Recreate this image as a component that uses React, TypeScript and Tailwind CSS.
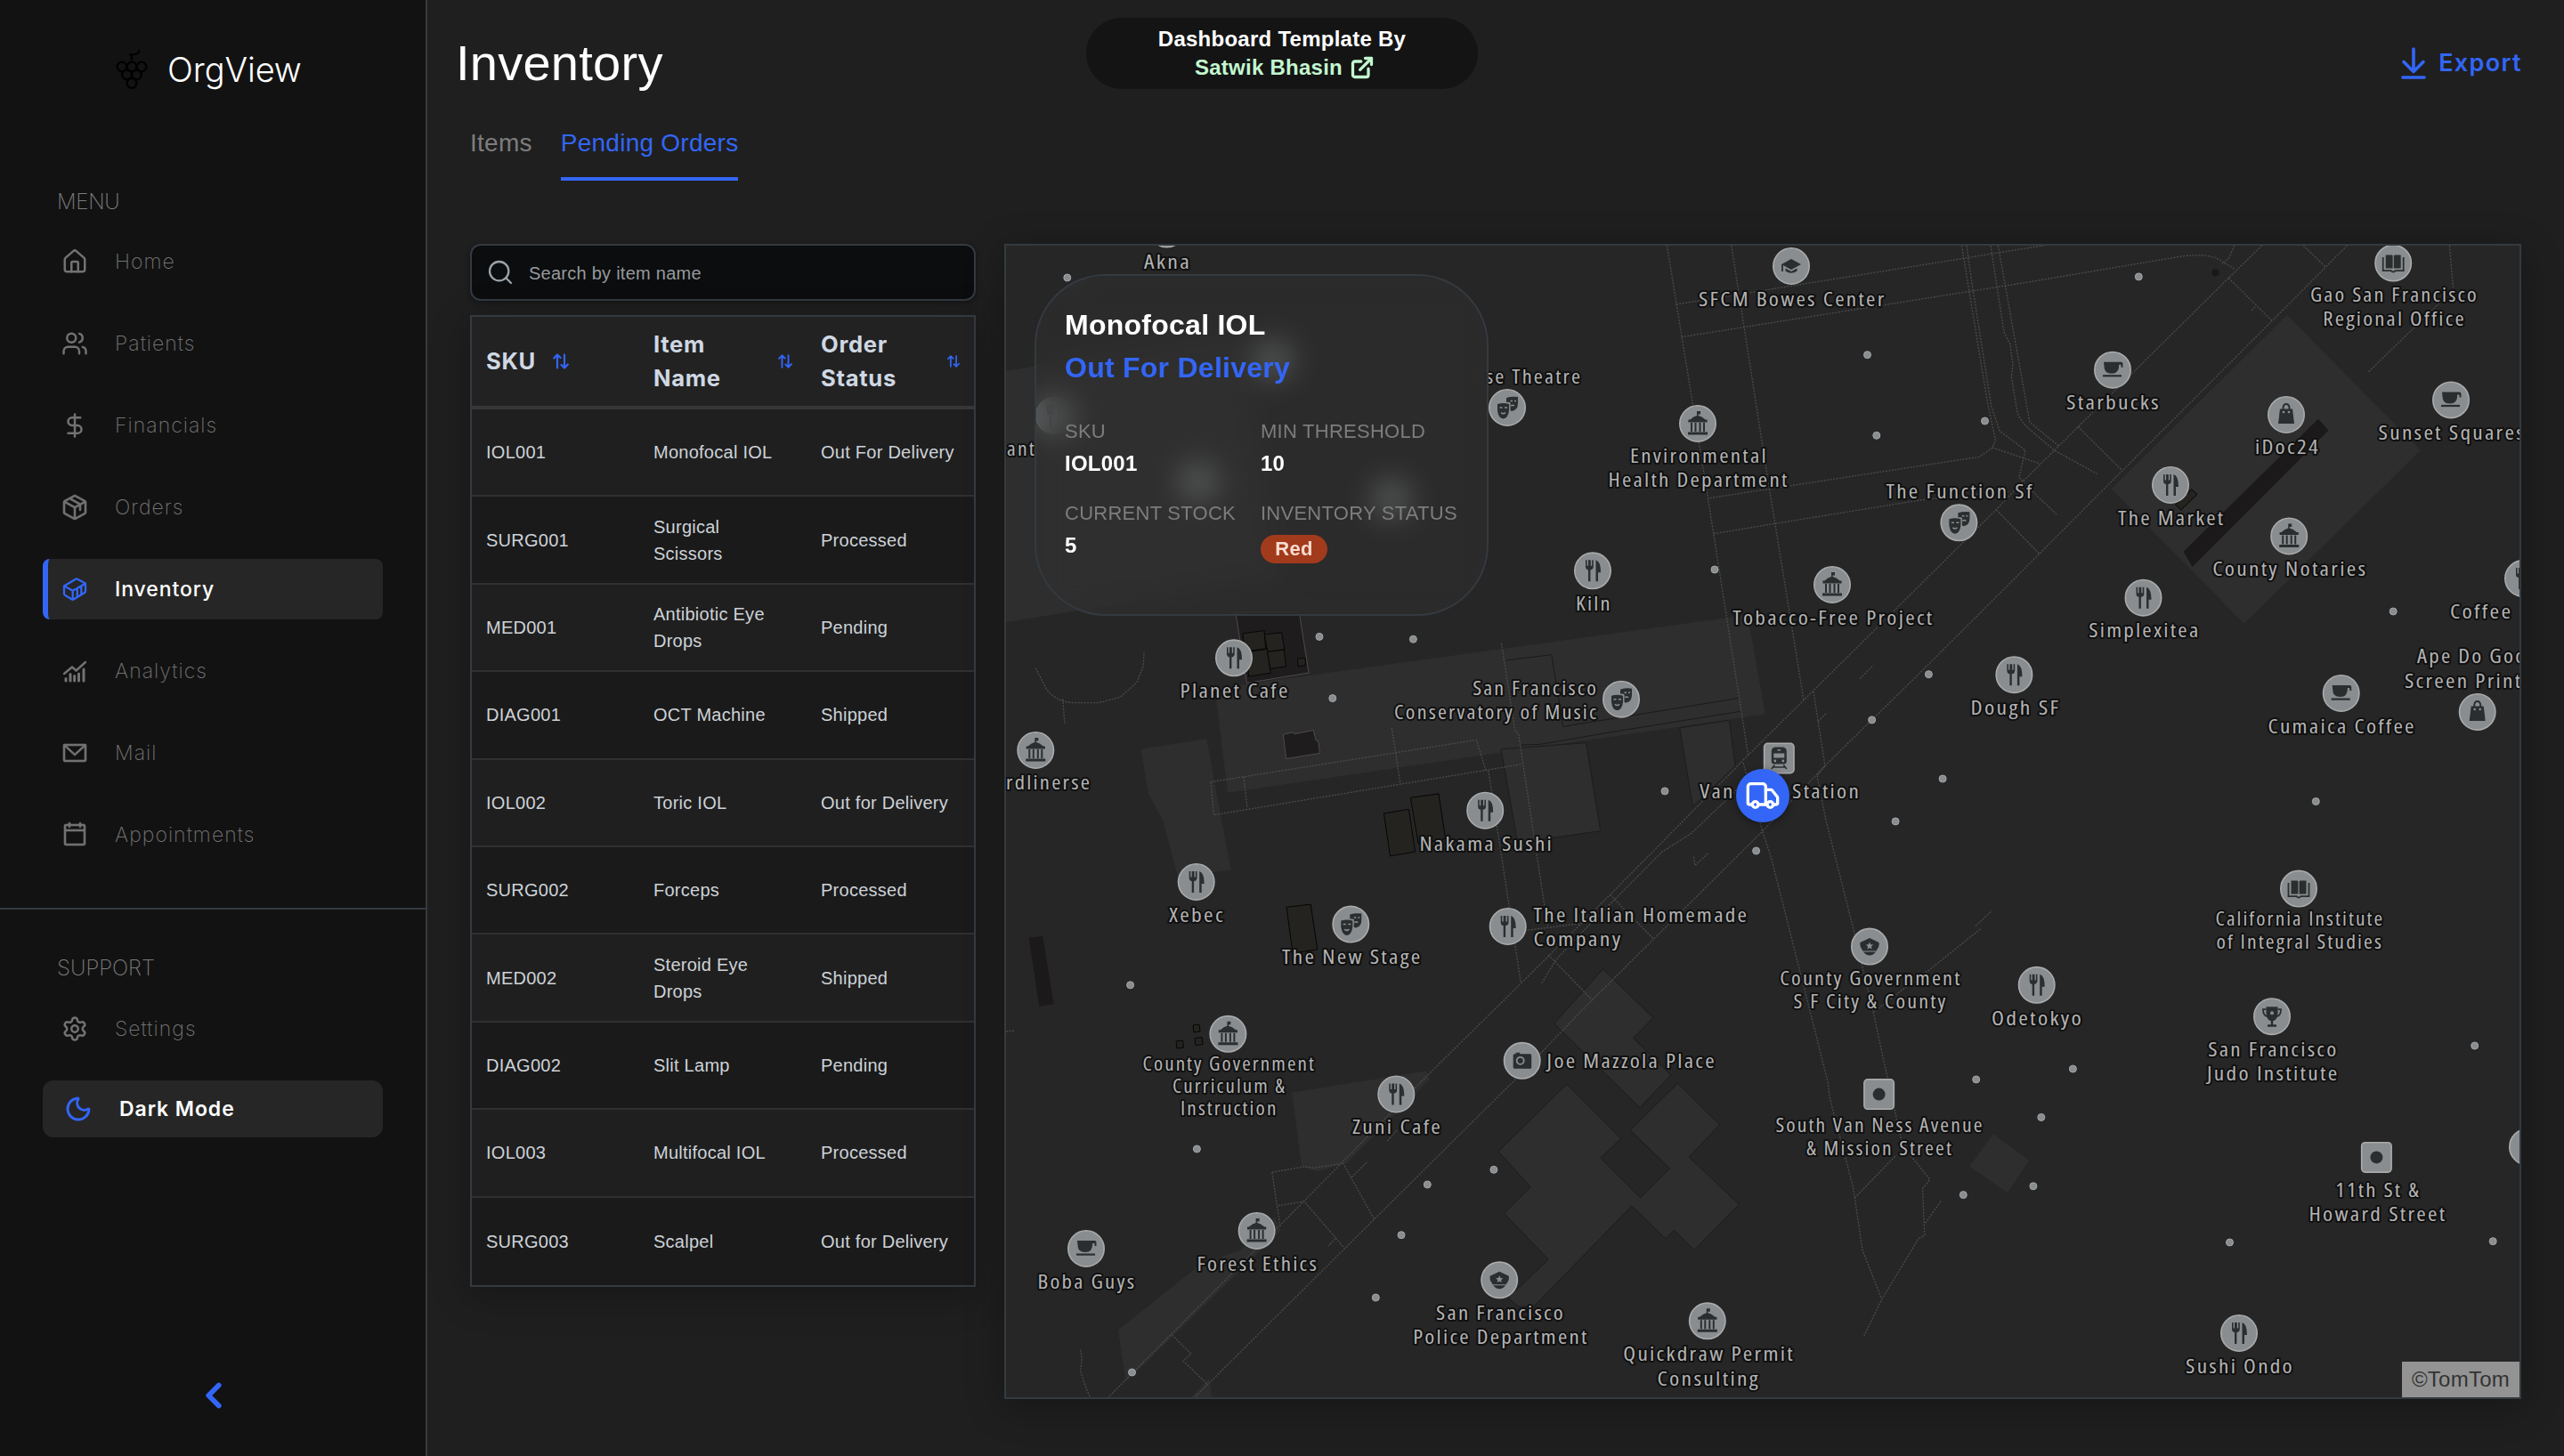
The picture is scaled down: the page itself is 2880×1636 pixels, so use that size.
import React from "react";
import {
  ChevronLeft,
  DollarSign,
  ExternalLink,
  House,
  Moon,
  Search,
  Settings,
  Truck,
  Users,
} from "lucide-react";
import { PiPackage, PiEnvelopeSimple, PiCalendarBlank } from "react-icons/pi";

/* ---------- Sidebar ---------- */

function GrapeLogo() {
  return (
    <svg viewBox="0 0 36 46" className="h-[46px] w-9" fill="none" stroke="#000" strokeWidth="2.2" strokeLinecap="round">
      <path d="M18 12V8c0-2 1-2 3-2 3 0 5-1 5-4M18 8l-2-2" />
      <circle cx="7" cy="20" r="5.4" />
      <circle cx="18" cy="20" r="5.4" />
      <circle cx="29" cy="20" r="5.4" />
      <circle cx="12.500" cy="29" r="5.4" />
      <circle cx="23.500" cy="29" r="5.4" />
      <circle cx="18" cy="38.500" r="5.4" />
    </svg>
  );
}

function ChartIcon() {
  return (
    <svg viewBox="0 0 28 28" className="size-7" fill="none" stroke="currentColor" strokeWidth="2.4" strokeLinecap="round" strokeLinejoin="round">
      <path d="M2 17 11 9.500 15.500 13.500 26 4" />
      <path d="M4 22.500v2.500M9 17.500v7.500M13.700 19.500v5.500M18.500 17v8M24 12v13" strokeWidth="3" />
    </svg>
  );
}

function ContainerIcon() {
  return (
    <svg viewBox="0 0 28 28" className="size-7" fill="none" stroke="currentColor" strokeWidth="2.3" strokeLinecap="round" strokeLinejoin="round">
      <path d="M2 10.400 14.500 2.900q1.500-.9 3 0L25 7q1 .6 1 1.600v7.700q0 1.200-1 1.800l-12 7.100q-1.300.8-2.600 0L3 20.800q-1-.6-1-1.700z" />
      <path d="M2.300 10.500 11.700 15.700 25.700 7.700M11.700 15.700v9.800M16.800 13v9.800M21.300 10.300v9.700" />
    </svg>
  );
}

const menu = [
  { label: "Home", icon: <House size={30} strokeWidth={2} /> },
  { label: "Patients", icon: <Users size={30} strokeWidth={2} /> },
  { label: "Financials", icon: <DollarSign size={30} strokeWidth={2} /> },
  { label: "Orders", icon: <PiPackage size={32} strokeWidth={5} /> },
  { label: "Inventory", icon: <ContainerIcon />, active: true },
  { label: "Analytics", icon: <ChartIcon /> },
  { label: "Mail", icon: <PiEnvelopeSimple size={32} strokeWidth={5} /> },
  { label: "Appointments", icon: <PiCalendarBlank size={32} strokeWidth={5} /> },
];

function NavItem({ label, icon, active }: { label: string; icon: React.ReactNode; active?: boolean }) {
  return (
    <div
      className={
        active
          ? "flex h-[68px] items-center rounded-lg border-l-[6px] border-[#3366f6] bg-[#262626] pl-3.5 text-white"
          : "flex h-[68px] items-center rounded-lg pl-5 text-[#727272]"
      }
    >
      <span className={active ? "flex w-8 justify-center text-[#3366f6]" : "flex w-8 justify-center"}>{icon}</span>
      <span
        className={
          active
            ? "ml-[29px] text-[23px] font-medium tracking-[0.04em]"
            : "ml-[29px] text-[23px] font-extralight tracking-[0.045em]"
        }
      >
        {label}
      </span>
    </div>
  );
}

function Sidebar() {
  return (
    <aside className="flex h-full w-[480px] shrink-0 flex-col border-r-2 border-[#343a40] bg-[#121212] font-['Inter',sans-serif]">
      <div className="mt-[50px] ml-[130px] flex h-14 items-center gap-[22px]">
        <GrapeLogo />
        <span className="text-[38px] font-light tracking-[-0.003em] text-white">OrgView</span>
      </div>
      <div className="mt-[105px] ml-16 h-8 text-2xl leading-8 font-extralight tracking-[-0.01em] text-[#7c7c7c]">MENU</div>
      <nav className="mt-[17px] flex flex-col gap-6 pr-12 pl-12">
        {menu.map((m) => (
          <NavItem key={m.label} {...m} />
        ))}
      </nav>
      <div className="mt-12 border-t-2 border-[#343a40]" />
      <div className="mt-[50px] ml-16 h-8 text-2xl leading-8 font-extralight tracking-normal text-[#7c7c7c]">SUPPORT</div>
      <div className="mt-[18px] flex flex-col gap-6 pr-12 pl-12">
        <NavItem label="Settings" icon={<Settings size={30} strokeWidth={2} />} />
        <div className="flex h-16 items-center rounded-xl bg-[#262626] pl-6 text-white">
          <span className="flex w-8 justify-center text-[#3366f6]">
            <Moon size={32} strokeWidth={2.2} />
          </span>
          <span className="ml-[30px] text-[23px] font-semibold tracking-[0.04em]">Dark Mode</span>
        </div>
      </div>
      <div className="mt-[270px] flex justify-center pl-0.5">
        <ChevronLeft size={46} strokeWidth={3} className="-my-[3px] text-[#3366f6]" />
      </div>
    </aside>
  );
}

/* ---------- Header ---------- */

function Header() {
  return (
    <header className="flex h-[140px] items-start pr-12 pl-8">
      <h1 className="mt-[31px] w-[708px] text-[56px] leading-[80px] text-white">Inventory</h1>
      <div className="mt-5 flex h-20 w-[440px] flex-col items-center justify-center rounded-full bg-[#141414] text-2xl leading-8 font-bold text-white">
        <span>Dashboard Template By</span>
        <span className="flex items-center gap-2 pl-1.5 text-[#c3f7cf]">
          Satwik Bhasin <ExternalLink size={28} strokeWidth={2.8} />
        </span>
      </div>
      <button className="mt-[51px] ml-auto flex h-10 items-center gap-3.5 font-['Inter',sans-serif] text-[27px] font-semibold tracking-[0.05em] text-[#3366f6]">
        <svg viewBox="0 0 28 36" className="h-9 w-7" fill="none" stroke="currentColor" strokeWidth="3.6" strokeLinecap="round" strokeLinejoin="round">
          <path d="M14 2v25M3 16.500 14 27.500l11-11M2 34h24" />
        </svg>
        <span className="-mr-px">Export</span>
      </button>
    </header>
  );
}

/* ---------- Orders table ---------- */

const rows = [
  ["IOL001", "Monofocal IOL", "Out For Delivery"],
  ["SURG001", "Surgical Scissors", "Processed"],
  ["MED001", "Antibiotic Eye Drops", "Pending"],
  ["DIAG001", "OCT Machine", "Shipped"],
  ["IOL002", "Toric IOL", "Out for Delivery"],
  ["SURG002", "Forceps", "Processed"],
  ["MED002", "Steroid Eye Drops", "Shipped"],
  ["DIAG002", "Slit Lamp", "Pending"],
  ["IOL003", "Multifocal IOL", "Processed"],
  ["SURG003", "Scalpel", "Out for Delivery"],
];

function SortIcon({ size }: { size: number }) {
  return (
    <svg width={size} height={size} viewBox="0 0 18 18" fill="none" stroke="#3366f6" strokeWidth="2.2" strokeLinecap="round" strokeLinejoin="round" className="shrink-0">
      <path d="M5 16.500V1.500L1.200 5.500M5 1.500 8.500 5M13 1.500v15l-3.500-3.500M13 16.500l3.800-4" />
    </svg>
  );
}

function OrdersTable() {
  return (
    <div className="mt-4 h-[1092px] w-[568px] border-2 border-[#343a40] bg-[#1b1b1b] shadow-[0_8px_40px_rgba(0,0,0,0.3)]">
      <div className="grid h-[104px] grid-cols-3 border-b-4 border-[#373737] bg-[#222222] font-['Inter',sans-serif] text-[25.600px] leading-[38px] font-bold tracking-[0.028em] text-[#cfd8e3]">
        <div className="flex items-center gap-[19px] pl-4">
          SKU <SortIcon size={18} />
        </div>
        <div className="flex items-center justify-between pr-4 pl-4">
          <span className="w-24">Item Name</span>
          <SortIcon size={16} />
        </div>
        <div className="flex items-center justify-between pr-4 pl-4">
          <span className="w-24">Order Status</span>
          <SortIcon size={14} />
        </div>
      </div>
      {rows.map((r, i) => (
        <div
          key={r[0]}
          className={
            (i % 2 === 0 ? "bg-[#1f1f1f] " : "bg-[#1a1a1a] ") +
            (i === rows.length - 1 ? "h-[98.400px] " : "h-[98.400px] border-b-2 border-[#303030] ") +
            "grid grid-cols-3 items-center text-xl leading-[30px] text-[#cdd2d8]"
          }
        >
          <div className="px-4">{r[0]}</div>
          <div className="pr-8 pl-4">{r[1]}</div>
          <div className="pl-4 whitespace-nowrap">{r[2]}</div>
        </div>
      ))}
    </div>
  );
}

/* ---------- Map ---------- */

const land = [
  "1130,416.7 1395,375 1440,650 1130,699",
  "1364.6,773.6 1963,691 1982.8,802.5 1379,890.7",
  "1281.6,841.8 1355.3,830 1382.5,977.5 1323,985.4 1306.6,922.9 1289.6,890.7",
  "2568.8,354.1 2719,505.7 2520.6,700.8 2371.5,549.3",
  "2238.7,1274 2279.2,1304 2255,1340 2212.3,1310.7",
  "1451.2,1227.7 1602,1203.3 1605.6,1213 1513,1306.7 1478.7,1316.7 1462,1310",
  "1392.6,1405 1349.6,1420 1256,1494.3 1264.6,1551.7 1277.8,1540 1438.6,1383 1432,1367",
  "1358.2,1548 1361,1570 1338,1570",
];

const plots = [
  "1686,841.8 1781.6,834.6 1797.7,933.6 1704.8,947",
  "1886.8,817.9 1942.5,809.3 1949.2,860.7 1901.4,906.4",
  "1800.4,1088.9 1857,1143.6 1834.6,1166.4 1876.9,1208 1842,1244.6 1745.7,1150",
  "1760,1218 1820.8,1279.3 1797.9,1301 1842.7,1345.7 1875.4,1313 1831.2,1269.7 1884.6,1217.3 1931.6,1263.7 1897.2,1300 1953.4,1353.3 1902.9,1404.7 1880.5,1382.3 1870.8,1391.7 1832.9,1355 1722.7,1468.3 1705.5,1468 1694,1458 1739.3,1415.3 1689.4,1363.3 1719.2,1334 1683,1293.7",
];

const darkAreas = [
  "1155.7,1053.6 1171.3,1052 1183.4,1127.9 1167.3,1130.7",
  "2604,470.8 2615.5,483.5 2462.5,636.9 2452.6,619.7",
];

const lots = [
  "1387.9,688 1459.3,688 1470,756 1400.4,767.5",
  "1441.4,825.4 1451.3,822.9 1454.8,824.6 1475.4,820.4 1478,831.8 1480.7,832.5 1482.5,846.4 1444.6,852.5",
];

const buildings = [
  "1395.9,711.8 1420,708.6 1421.8,728.9 1398.1,731.8",
  "1420.4,712.9 1439.6,710.7 1442.8,729.6 1423.6,732.5",
  "1400.4,732.5 1423.6,729.3 1427.1,756.4 1402.6,760",
  "1423.6,732.5 1442.3,730 1444.6,748.9 1426.7,751.4",
  "1457.5,740 1466,739.3 1466.4,747.9 1458,748.6",
  "1554.4,913.9 1582.5,909.3 1589.6,957.1 1561.5,961.8",
  "1584.3,896.4 1616,891.8 1623.6,942.5 1593.2,947.9",
  "1445,1019.3 1472.2,1016.1 1479.8,1066.8 1452.1,1071.1",
  "1340,1152 1347,1151 1348,1159 1341,1160",
  "1342,1166.500 1350,1165.500 1351,1173.500 1343,1174.500",
  "1321,1170 1328.500,1169 1329.500,1177 1322,1178",
  "2461.7,549.7 2468,555.4 2449.8,573 2443.5,567",
];

const paths = [
  "M1872.5 276L1918 556.7 1949.8 760 1963.5 848",
  "M1944.8 276L1985.4 536.7 2021.7 760 2025.9 786.8",
  "M1882.8 342L2280 278.3 2295.6 276",
  "M1888.6 378.7L2280 316.7 2450 288Q2485 284 2496 294L2511 302.9",
  "M2203.5 276L2232.6 453.3 2241.4 494.3 2238 503 2223.4 513.3 1918 560",
  "M2209 276L2215.7 323.3 2236.8 456.7 2246 484 2275 506 2267.8 536.7 2273 541",
  "M2236 276L2251 373.3 2257.8 386.7 2261 410 2259.3 423.3 2265.9 463.3Q2270 474 2280 482.7L2307.4 506 2355.7 532.5",
  "M2244.4 276L2279.8 474.3 2312.2 501",
  "M2238 503L2291.6 521",
  "M1925 599.7L1993.8 588.3 2158.3 561.7 2257.8 552.3",
  "M2540.7 276L2503.2 312.4 2271.9 541.3 2242.5 572.3 2053 760 1963.9 848.2 1808.5 1005.4 1708.4 1105 1605 1206.7 1464.4 1350 1245 1570",
  "M2636.4 276L2260 653 2152.6 760 2048.9 861.4 1979.7 934 1780 1132 1705 1210 1543.6 1370 1342 1570",
  "M2503.2 312.4L2551.8 360.3",
  "M2587.4 276L2611.5 299.4",
  "M2334 479.3L2383.8 528.6",
  "M2509.9 276L2503.2 290.6 2496 296.4",
  "M2533 345L2528 350",
  "M2751.5 276L2755.5 323",
  "M2660.6 417.7L2739.6 341",
  "M2242.5 573L2290.4 622",
  "M2310 578L2271.9 541.3",
  "M1163.3 750.7L1175 773.6Q1185 788 1204.8 789.6L1234.7 789.6 1258.4 783.2 1277 766.8 1284.3 748 1285 732.5",
  "M1193.7 785.4L1196 814",
  "M1130 1159L1140 1158",
  "M1360 878.6L1658.4 831.4 1669 865.7",
  "M1360 878.6L1363.3 915.7 1710 858.6",
  "M1396.8 872.9L1401 907.9",
  "M1563.3 818L1573 881",
  "M1671.8 865.7L1708.4 1105",
  "M1686.5 722.9L1701.7 821 1705.7 824.6 1738.3 1040.7",
  "M1702.6 1046.8L1780.7 1037",
  "M1958 880L1936 901.8 1899.8 936.4 1867 957 1780 1044.6 1748 1078 1731.6 1105",
  "M1808.5 1005.4L1857 1054.6",
  "M1739.2 1072.9L1788.8 1124",
  "M2037 776.8L2050 860.7",
  "M2050 860.7L2041 871.4 2050.9 921.4 2082.5 1046.4 2104.2 1137.5 2120 1210.7 2134.9 1277.9 2146.6 1299 2167.7 1325.3 2159.5 1335.6 2161.8 1388 2154.8 1392 2113.7 1460 2093.8 1500.8",
  "M1958 857L1979.7 934 1989.6 964.3 2033 1135.7 2053.6 1217.9 2054.8 1232 2081.5 1334 2092 1404.6 2113.7 1460",
  "M2083.2 1346L2130 1298",
  "M2180 1349.7L2161.8 1375.5",
  "M2104.2 1137.5L2133.9 1114.3 2165.5 1091 2224.8 1043.6",
  "M2219 1040.4L2237.5 1023.2",
  "M2089.2 762.5L2104.2 747.5",
  "M2042 810.7L2052 800.7",
  "M1902.5 962.5L1903.8 972.5 1918.4 959",
  "M1428.8 1317.3L1464.4 1311 1475.9 1312.3 1508.6 1307 1543.6 1370",
  "M1428.8 1317.3L1438 1378.3",
  "M1435.7 1354.7L1465 1350 1510.3 1402.7",
  "M1518.3 1322.7L1536 1305",
  "M1500 1391.7L1492 1400",
  "M1568.9 1270L1557.4 1283.3",
  "M1316.3 1500L1338 1521 1329 1529.3 1356 1555",
  "M1213.6 1516.7L1215.3 1526.7 1213.6 1540 1218.7 1556.7 1224.5 1570",
];

const darkLines = [
  "M1780 812.500L1954 784.300",
  "M1708.400 837L1729.400 836.400 1820 821 1956.700 799",
  "M1692.300 741.800L1742.800 735.700 1755.700 816.400 1780 812.500",
];

const dots: [number, number][] = [
  [1198.8, 312], [2097.5, 398.7], [2229.5, 473], [2107.8, 489.3], [1926, 640], [2166.4, 757.7],
  [2402.3, 310.9], [2688.2, 687], [1482, 715.4], [1587.4, 718.2], [1496.8, 784.6], [1269.6, 1106.8],
  [2102.6, 808.9], [2182.1, 875], [2129.1, 922.9], [1870, 888.9], [1972.6, 956], [2328.4, 1201],
  [2219.7, 1212.9], [2292.8, 1255.4], [1344.4, 1291], [1603.3, 1331], [1677.9, 1314.3], [1574, 1387.7],
  [1545.3, 1458], [1271.5, 1542], [2601.3, 900.5], [2779.7, 1175], [2283.9, 1332.8], [2205.3, 1342.6],
  [2504.5, 1396], [2800.2, 1394.7],
];

type Kind = "food" | "cup" | "gov" | "mask" | "bag" | "book" | "grad" | "camera" | "police" | "trophy" | "train" | "stop";

const glyphs: Record<Kind, React.ReactNode> = {
  food: (
    <>
      <path d="M-8-12v7.500q0 3 3 3.600V12h2.400V-.900Q.800-1.500.800-4.500V-12h-1.600v6.500h-1.400V-12h-2.800v6.500h-1.400V-12z" />
      <path d="M3.500 12V-12q5.500 1.500 5.500 14H6v10z" />
    </>
  ),
  cup: (
    <>
      <path d="M-10-9H9.500q2 0 2 2v4H9.500v-3H7.200q.3 10-8.200 10T-9.500-4z" />
      <rect x="-11" y="5.500" width="21" height="2.200" />
    </>
  ),
  gov: (
    <>
      <path d="M-1-14H3v3.500H.600v1.500q4 .5 8 4.500h2v3H-10.600v-3h2q4-4 7.600-4.500z" />
      <path d="M-8-1h2V9h-2zM-3.500-1h2V9h-2zM1.500-1h2V9h-2zM6-1h2V9H6zM-11 9.500H11V12.500H-11z" />
    </>
  ),
  mask: (
    <>
      <path d="M-1-11q6-2 13-1v7q0 8-7 9-1-.3-1.500-1V-5.500Q2-6.500-1-6z" />
      <path d="M-11-4Q-4-6 2-4V3Q1 12-4.500 12.500-10 12-11 3z" />
      <path d="M-8.500 0h3M-3 0h3M3.500-7.500h2.500M8-7.500h2" stroke="#8a8d8f" strokeWidth="1.500" />
      <path d="M-7 5.500q2.500 2.500 5 0M4-2q2-1.500 4 0" stroke="#8a8d8f" strokeWidth="1.500" fill="none" />
    </>
  ),
  bag: (
    <>
      <path d="M-7-6.500H7L9 10H-9z" />
      <path d="M-3.500-5v-3Q-3-12 0-12t3.500 4v3" fill="none" stroke="#2b2e2f" strokeWidth="2" />
      <circle cx="-3" cy="-3" r="1.300" fill="#8a8d8f" />
      <circle cx="3" cy="-3" r="1.300" fill="#8a8d8f" />
    </>
  ),
  book: (
    <>
      <path d="M-8.500-9H-2q1.400.2 1.400 1V6H-8.500zM8.500-9H2q-1.400.2-1.400 1V6H8.500z" />
      <path d="M-11.500-6.500V8.500H-2.500q1 1.500 2.500 1.500t2.500-1.500H11.500V-6.500" fill="none" stroke="#2b2e2f" strokeWidth="1.800" />
    </>
  ),
  grad: (
    <>
      <path d="M0-8 11-2 0 4-11-2z" />
      <path d="M-6.500 2.500v3Q0 10 6.500 5.500v-3L0 6z" />
      <path d="M-10-2V6" stroke="#2b2e2f" strokeWidth="1.800" />
    </>
  ),
  camera: (
    <>
      <path d="M-10-6q0-1.500 1.500-1.500H-7V-9h4.500v1.500H9q1.500 0 1.500 1.500V7.500Q10.500 9 9 9H-8.500Q-10 9-10 7.500z" />
      <circle cx="-2" cy="0" r="4" fill="none" stroke="#8a8d8f" strokeWidth="1.800" />
    </>
  ),
  police: (
    <>
      <path d="M0-9.500 10.500-4.500Q11.500 0 8 4V5H-8V4Q-11.500 0-10.500-4.500z" />
      <path d="M-7 6H7Q4 10 0 10T-7 6z" />
      <path d="m0-5 1.200 2.700 2.900.3-2.200 1.900.7 2.900L0 1.300-2.600 2.800l.7-2.900L-4.100-2l2.900-.3z" fill="#8a8d8f" />
    </>
  ),
  trophy: (
    <>
      <path d="M-6.500-11H6.500V-4Q6 4 1.200 5v4H5v2.500H-5V9h3.800V5Q-6 4-6.500-4z" />
      <path d="M-6.500-8H-10Q-10-1-5 0M6.500-8H10Q10-1 5 0" fill="none" stroke="#2b2e2f" strokeWidth="1.800" />
      <circle cx="0" cy="-4" r="2" fill="#8a8d8f" />
    </>
  ),
  train: (
    <>
      <path d="M-5-12.500H5q3.500 1 3.500 4.500V3.500q0 3-3 3H-5.500q-3 0-3-3V-8q0-3.500 3.500-4.500z" />
      <path d="M-6-5.500H6V-.500H-6zM-1.800-10h3.600v1.400h-3.600z" fill="#8a8d8f" />
      <circle cx="-4.500" cy="3" r="1.400" fill="#8a8d8f" />
      <circle cx="4.500" cy="3" r="1.400" fill="#8a8d8f" />
      <path d="M-5 7.500-8.500 12M5 7.500 8.500 12M-6.500 10h13" stroke="#2b2e2f" strokeWidth="1.600" />
    </>
  ),
  stop: <circle cx="0" cy="0" r="7" />,
};

const pins: [Kind, number, number][] = [
  ["food", 1310.6, 257.5], ["grad", 2012, 299], ["mask", 1693, 458], ["gov", 1907, 476], ["food", 1789, 641.3],
  ["mask", 2200.4, 587.3], ["gov", 2058, 657], ["cup", 2373, 415.7], ["book", 2688.2, 295.6], ["bag", 2568, 466],
  ["cup", 2753, 449.4], ["food", 2438, 545], ["gov", 2571.2, 602.5], ["food", 2407.5, 671.7], ["food", 2834, 650],
  ["food", 2262.4, 758.2], ["cup", 2629.7, 779], ["bag", 2782.7, 800], ["food", 1386, 739.3], ["mask", 1821, 785.7],
  ["gov", 1163.3, 843], ["food", 1343.7, 991], ["food", 1668.2, 910.7], ["mask", 1517.3, 1038.6], ["food", 1693.7, 1041],
  ["gov", 1379.4, 1161.8], ["camera", 1709.7, 1191.8], ["food", 1568.3, 1229.5], ["cup", 1220, 1403], ["gov", 1411.6, 1383],
  ["police", 1684.2, 1438.3], ["gov", 1917.8, 1484.3], ["food", 2287.7, 1106.8], ["police", 2100, 1063.6], ["book", 2582, 998.6],
  ["trophy", 2552, 1142.2], ["food", 2839, 1288.7], ["food", 2515, 1498],
  ["food", 1184, 467], ["food", 1430, 404], ["food", 1346, 541], ["food", 1563, 560],
];

const squarePins: [Kind, number, number][] = [
  ["train", 1998.3, 852],
  ["stop", 2110.6, 1229.6],
  ["stop", 2669.4, 1300.4],
];

/* [text, left edge, right edge, baseline] */
const labels: [string, number, number, number][] = [
  ["Akna", 1284.9, 1336.2, 302],
  ["SFCM Bowes Center", 1907.9, 2116.6, 343.8],
  ["se Theatre", 1669, 1775.3, 430.7],
  ["ant", 1131, 1162, 512],
  ["Environmental", 1831, 1983.8, 520],
  ["Health Department", 1806.5, 2007.5, 547.3],
  ["Kiln", 1770, 1808.6, 686],
  ["The Function Sf", 2118.5, 2282.5, 560],
  ["Tobacco-Free Project", 1946.2, 2170.5, 702],
  ["Starbucks", 2320.9, 2425, 460],
  ["Gao San Francisco", 2595, 2782, 339],
  ["Regional Office", 2609.3, 2767.8, 365.6],
  ["iDoc24", 2532.9, 2604, 510.3],
  ["Sunset Squares", 2671.6, 2835, 494.2],
  ["The Market", 2379, 2497.5, 590],
  ["County Notaries", 2485.2, 2657.4, 647.3],
  ["Simplexitea", 2346.2, 2469.5, 716],
  ["Coffee", 2751.9, 2820.3, 694.7],
  ["Dough SF", 2213.5, 2312.5, 803.2],
  ["Cumaica Coffee", 2547.5, 2711.8, 823.7],
  ["Ape Do Good", 2715.1, 2850, 745.2],
  ["Screen Printing", 2700.9, 2864.5, 772.5],
  ["Planet Cafe", 1325.6, 1446.7, 784.2],
  ["San Francisco", 1654.2, 1793, 781.4],
  ["Conservatory of Music", 1566, 1793.5, 807.5],
  ["rdlinerse", 1130, 1224.2, 887],
  ["Xebec", 1312.9, 1374, 1035.7],
  ["Nakama Sushi", 1594.4, 1743, 955.8],
  ["The New Stage", 1440, 1595.5, 1083.3],
  ["The Italian Homemade", 1722.5, 1962.3, 1035.7],
  ["Company", 1722.5, 1820.4, 1063],
  ["County Government", 1283.6, 1476, 1203],
  ["Curriculum &", 1317, 1443, 1228],
  ["Instruction", 1326, 1433.5, 1253],
  ["Joe Mazzola Place", 1737.6, 1925.9, 1200.3],
  ["Zuni Cafe", 1518.9, 1618.2, 1274],
  ["Boba Guys", 1165.5, 1274.3, 1448],
  ["Forest Ethics", 1344.4, 1479.1, 1427.7],
  ["San Francisco", 1613, 1756, 1482.7],
  ["Police Department", 1587.2, 1782.6, 1510],
  ["Quickdraw Permit", 1823.3, 2014, 1529.3],
  ["Consulting", 1861.4, 1975, 1556.7],
  ["Odetokyo", 2236.9, 2338, 1151.5],
  ["County Government", 1999.2, 2201.6, 1106.8],
  ["S F City & County", 2014.5, 2185.5, 1133],
  ["South Van Ness Avenue", 1994.4, 2226.6, 1271.8],
  ["& Mission Street", 2029, 2192, 1297.6],
  ["Van Ness Station", 1909.3, 2088, 896.8],
  ["California Institute", 2488.5, 2676.2, 1040.3],
  ["of Integral Studies", 2489.6, 2675, 1065.7],
  ["San Francisco", 2480.2, 2624.5, 1187],
  ["Judo Institute", 2479, 2625.5, 1214],
  ["11th St &", 2623.2, 2717, 1345],
  ["Howard Street", 2593.5, 2746.5, 1372.3],
  ["Sushi Ondo", 2455, 2575, 1542.6],
];

function MapCanvas() {
  return (
    <svg viewBox="1130 276 1700 1294" className="h-[1294px] w-[1700px] bg-[#262626]">
      <g fill="#2e2e2e">
        {land.map((p) => (
          <polygon key={p} points={p} />
        ))}
      </g>
      <g fill="#2e2e2e" stroke="#1c1c1c" strokeWidth="1">
        {plots.map((p) => (
          <polygon key={p} points={p} />
        ))}
      </g>
      <g fill="#1b1919">
        {darkAreas.map((p) => (
          <polygon key={p} points={p} />
        ))}
      </g>
      <g fill="#1f1c1d" stroke="#4f4a4c" strokeWidth="1">
        {lots.map((p) => (
          <polygon key={p} points={p} />
        ))}
      </g>
      <g fill="#242320" stroke="#060606" strokeWidth="1">
        {buildings.map((p) => (
          <polygon key={p} points={p} />
        ))}
      </g>
      <g fill="none" stroke="#1a1a1a" strokeWidth="1">
        {darkLines.map((d) => (
          <path key={d} d={d} />
        ))}
      </g>
      <g fill="none" stroke="#4c4c4c" strokeWidth="1.300" strokeDasharray="2 1.500">
        {paths.map((d) => (
          <path key={d} d={d} />
        ))}
      </g>
      <circle cx="2488.500" cy="306.300" r="4" fill="#181818" />
      <g fill="#8a8d8f" stroke="#a5a7a8" strokeWidth="1">
        {dots.map(([x, y]) => (
          <circle key={`${x}-${y}`} cx={x} cy={y} r="4" />
        ))}
      </g>
      {pins.map(([kind, x, y]) => (
        <g key={`${x}-${y}`} transform={`translate(${x} ${y})`} fill="#2b2e2f">
          <circle r="20.200" fill="#8a8d8f" stroke="#a9abac" strokeWidth="1.600" />
          {glyphs[kind]}
        </g>
      ))}
      {squarePins.map(([kind, x, y]) => (
        <g key={`${x}-${y}`} transform={`translate(${x} ${y})`} fill="#2b2e2f">
          <rect x="-16.700" y="-16.700" width="33.400" height="33.400" rx="4" fill="#8a8d8f" stroke="#a9abac" strokeWidth="1.600" />
          {glyphs[kind]}
        </g>
      ))}
      <g
        className="font-['Open_Sans','Noto_Sans',sans-serif] text-[22.500px] font-medium tracking-[0.09em] [font-stretch:75%]"
        fill="#b4b4b4"
        stroke="#111111"
        strokeWidth="4"
        strokeLinejoin="round"
        paintOrder="stroke"
      >
        {labels.map(([text, x1, x2, y]) => (
          <text key={`${text}-${y}`} x={x1} y={y} textLength={x2 - x1 + 2} lengthAdjust="spacingAndGlyphs">
            {text}
          </text>
        ))}
      </g>
    </svg>
  );
}

function OrderCard() {
  return (
    <div className="absolute top-8 left-8 h-[384px] w-[510px] rounded-[80px] border-2 border-[#343a40] bg-[#303030]/50 pt-[31px] pl-8 backdrop-blur-[16px]">
      <div className="text-[32px] leading-[48px] font-bold text-white">Monofocal IOL</div>
      <div className="text-[32px] leading-[48px] font-bold text-[#3366f6]">Out For Delivery</div>
      <div className="mt-[30px] grid grid-cols-[220px_1fr] gap-y-5 text-[22px] leading-9 text-[#7d7d7d]">
        <div>
          SKU
          <div className="text-2xl leading-9 font-bold text-white">IOL001</div>
        </div>
        <div>
          MIN THRESHOLD
          <div className="text-2xl leading-9 font-bold text-white">10</div>
        </div>
        <div className="whitespace-nowrap">
          CURRENT STOCK
          <div className="text-2xl leading-9 font-bold text-white">5</div>
        </div>
        <div className="whitespace-nowrap">
          INVENTORY STATUS
          <div className="mt-1.5 flex h-8 w-[75px] items-center justify-center rounded-full bg-[#a23b1c] text-[22px] font-bold text-[#fbdccf]">Red</div>
        </div>
      </div>
    </div>
  );
}

function MapPanel() {
  return (
    <div className="relative h-[1298px] w-[1704px] shrink-0 overflow-hidden border-2 border-[#343a40] shadow-[0_8px_40px_rgba(0,0,0,0.3)]">
      <MapCanvas />
      <div className="absolute top-[588px] left-[820px] flex size-[60px] items-center justify-center rounded-full bg-[#3366f6] text-white shadow-[0_2px_8px_rgba(0,0,0,0.4)]">
        <Truck size={40} strokeWidth={2} />
      </div>
      <OrderCard />
      <div className="absolute right-0 bottom-0 flex h-10 w-[132px] items-center justify-center bg-[#939393] text-2xl text-[#333333]">©TomTom</div>
    </div>
  );
}

/* ---------- Page ---------- */

export default function App() {
  return (
    <div className="flex h-[1636px] w-[2880px] overflow-hidden bg-[#1f1f1f] font-['Liberation_Sans',Arial,sans-serif] tracking-[0.016em]">
      <Sidebar />
      <main className="flex flex-1 flex-col">
        <Header />
        <div className="flex h-[63px] gap-8 pl-12 text-[28px] leading-[42px] text-[#7d7d7d]">
          <span>Items</span>
          <span className="border-b-4 border-[#3366f6] text-[#3366f6]">Pending Orders</span>
        </div>
        <div className="mt-[71px] flex gap-8 pl-12">
          <div className="w-[568px] shrink-0">
            <div className="flex h-16 items-center rounded-xl border-2 border-[#343a40] bg-[#0b0d0f] pl-4 text-xl text-[#969a9c] shadow-[0_2px_6px_rgba(0,0,0,0.4)]">
              <Search size={32} strokeWidth={1.7} className="text-[#9ca3a8]" />
              <span className="mt-0.5 ml-4">Search by item name</span>
            </div>
            <OrdersTable />
          </div>
          <MapPanel />
        </div>
      </main>
    </div>
  );
}
